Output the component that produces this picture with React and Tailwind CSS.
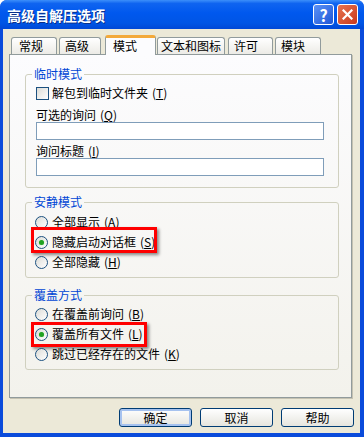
import React from 'react';

const font = "font-['Noto_Sans_CJK_SC','Noto_Sans',sans-serif]";

const Tab = ({ label, className, active }) =>
    active ? (
        <div className={`relative z-10 -mb-px h-[20px] rounded-t-[3px] border border-b-0 border-[#919B9C] border-t-[3px] border-t-[#F3A93A] bg-[#FCFCFE] text-[12px] leading-[15px] text-black ${className}`}>
            {label}
        </div>
    ) : (
        <div className={`h-[17px] rounded-t-[3px] border border-b-0 border-[#919B9C] bg-gradient-to-b from-white to-[#ECEBE6] text-[12px] leading-[16px] text-black ${className}`}>
            {label}
        </div>
    );

const Mn = ({ k }) => (
    <span className="ml-[4px]">
        (<u>{k}</u>)
    </span>
);

const Radio = ({ checked }) => (
    <span className="flex h-[13px] w-[13px] shrink-0 items-center justify-center rounded-full border border-[#1C5180] bg-gradient-to-br from-[#DCDCD7] to-white">
        {checked && <span className="h-[5px] w-[5px] rounded-full bg-[#21A121] shadow-[0_0_1px_#8EE08E]" />}
    </span>
);

const RadioRow = ({ label, k, checked, className, children }) => (
    <div className={`relative flex h-[14px] items-center gap-[4px] text-[12px] leading-[14px] ${className}`}>
        <Radio checked={checked} />
        <span>
            {label}
            <Mn k={k} />
        </span>
        {children}
    </div>
);

const Group = ({ title, className, children }) => (
    <fieldset className={`mx-[15px] w-[314px] rounded-[3px] border border-[#D0D0BF] pl-[9px] ${className}`}>
        <legend className="-ml-[3px] px-[2px] text-[12px] leading-[14px] text-[#0046D5]">{title}</legend>
        {children}
    </fieldset>
);

const Button = ({ label, focus }) => (
    <button
        className={`h-[19px] w-[73px] rounded-[3px] border border-[#003C74] bg-gradient-to-b from-white to-[#E6E5DE] text-[12px] leading-[16px] text-black ${focus ? 'shadow-[inset_0_0_0_2px_#A6C2EF]' : ''}`}
    >
        {label}
    </button>
);

export default function App() {
    return (
        <div className={`flex h-[437px] w-[364px] flex-col rounded-t-[7px] bg-[#0A4BDB] ${font}`}>
            {/* title bar */}
            <div className="flex h-[29px] items-center rounded-t-[7px] bg-[linear-gradient(to_bottom,#3C8FFA_0%,#0F64F0_12%,#0058EE_45%,#0055E5_80%,#0048D6_100%)] pl-[7px] pr-[6px]">
                <span className="flex-1 text-[14px] font-bold leading-[16px] text-white [text-shadow:1px_1px_0_#0A2F8A]">高级自解压选项</span>
                <div className="flex h-[21px] w-[21px] items-center justify-center rounded-[3px] border border-white bg-gradient-to-br from-[#5C92F6] to-[#1E55D6] text-[16px] font-bold leading-none text-white">
                    ?
                </div>
                <div className="ml-[3px] flex h-[21px] w-[21px] items-center justify-center rounded-[3px] border border-white bg-gradient-to-br from-[#E7734F] to-[#C8361A]">
                    <svg width="11" height="11" viewBox="0 0 11 11">
                        <path d="M1.5 1.5 L9.5 9.5 M9.5 1.5 L1.5 9.5" stroke="white" strokeWidth="2.2" strokeLinecap="square" />
                    </svg>
                </div>
            </div>

            {/* body */}
            <div className="mb-[4px] ml-[3px] mr-[4px] flex flex-1 flex-col bg-[#ECE9D8] pl-[6px] pt-[6px]">
                <div className="flex items-end">
                    <Tab label="常规" className="ml-[2px] w-[46px] pl-[7px]" />
                    <Tab label="高级" className="ml-[2px] w-[42px] pl-[5px]" />
                    <Tab label="模式" active className="ml-[4px] w-[51px] pl-[7px]" />
                    <Tab label="文本和图标" className="ml-[1px] w-[68px] pl-[3px]" />
                    <Tab label="许可" className="ml-[3px] w-[45px] pl-[5px]" />
                    <Tab label="模块" className="ml-[2px] w-[46px] pl-[5px]" />
                </div>

                <div className="h-[344px] w-[343px] border border-[#919B9C] bg-gradient-to-b from-[#FCFCFE] to-[#F3F2EC] pt-[12px] text-black shadow-[1px_1px_0_#C5C2B2]">
                    <Group title="临时模式" className="pb-[11px]">
                        <div className="ml-[1px] mt-[5px] flex h-[14px] items-center gap-[3px] text-[12px] leading-[14px]">
                            <span className="h-[13px] w-[13px] border border-[#1C5180] bg-gradient-to-br from-[#DCDCD7] to-white" />
                            <span>
                                解包到临时文件夹
                                <Mn k="T" />
                            </span>
                        </div>
                        <div className="ml-[1px] mt-[8px] h-[14px] text-[12px] leading-[14px]">
                            可选的询问
                            <Mn k="Q" />
                        </div>
                        <div className="ml-[1px] h-[18px] w-[288px] border border-[#7F9DB9] bg-white" />
                        <div className="ml-[1px] mt-[4px] h-[14px] text-[12px] leading-[14px]">
                            询问标题
                            <Mn k="I" />
                        </div>
                        <div className="ml-[1px] h-[18px] w-[288px] border border-[#7F9DB9] bg-white" />
                    </Group>

                    <Group title="安静模式" className="mt-[7px] pb-[8px]">
                        <RadioRow label="全部显示" k="A" className="mt-[6px]" />
                        <RadioRow label="隐藏启动对话框" k="S" checked className="mt-[6px]">
                            <span className="absolute left-[-4px] top-[-8px] h-[26px] w-[126px] border-[3px] border-[#FF0000] shadow-[2px_2px_3px_rgba(0,0,0,0.45)]" />
                        </RadioRow>
                        <RadioRow label="全部隐藏" k="H" className="mt-[6px]" />
                    </Group>

                    <Group title="覆盖方式" className="mt-[10px] pb-[8px]">
                        <RadioRow label="在覆盖前询问" k="B" className="mt-[5px]" />
                        <RadioRow label="覆盖所有文件" k="L" checked className="mt-[6px]">
                            <span className="absolute left-[-4px] top-[-5px] h-[25px] w-[116px] border-[3px] border-[#FF0000] shadow-[2px_2px_3px_rgba(0,0,0,0.45)]" />
                        </RadioRow>
                        <RadioRow label="跳过已经存在的文件" k="K" className="mt-[6px]" />
                    </Group>
                </div>

                <div className="mt-[10px] flex gap-[8px] pl-[110px]">
                    <Button label="确定" focus />
                    <Button label="取消" />
                    <Button label="帮助" />
                </div>
            </div>
        </div>
    );
}
